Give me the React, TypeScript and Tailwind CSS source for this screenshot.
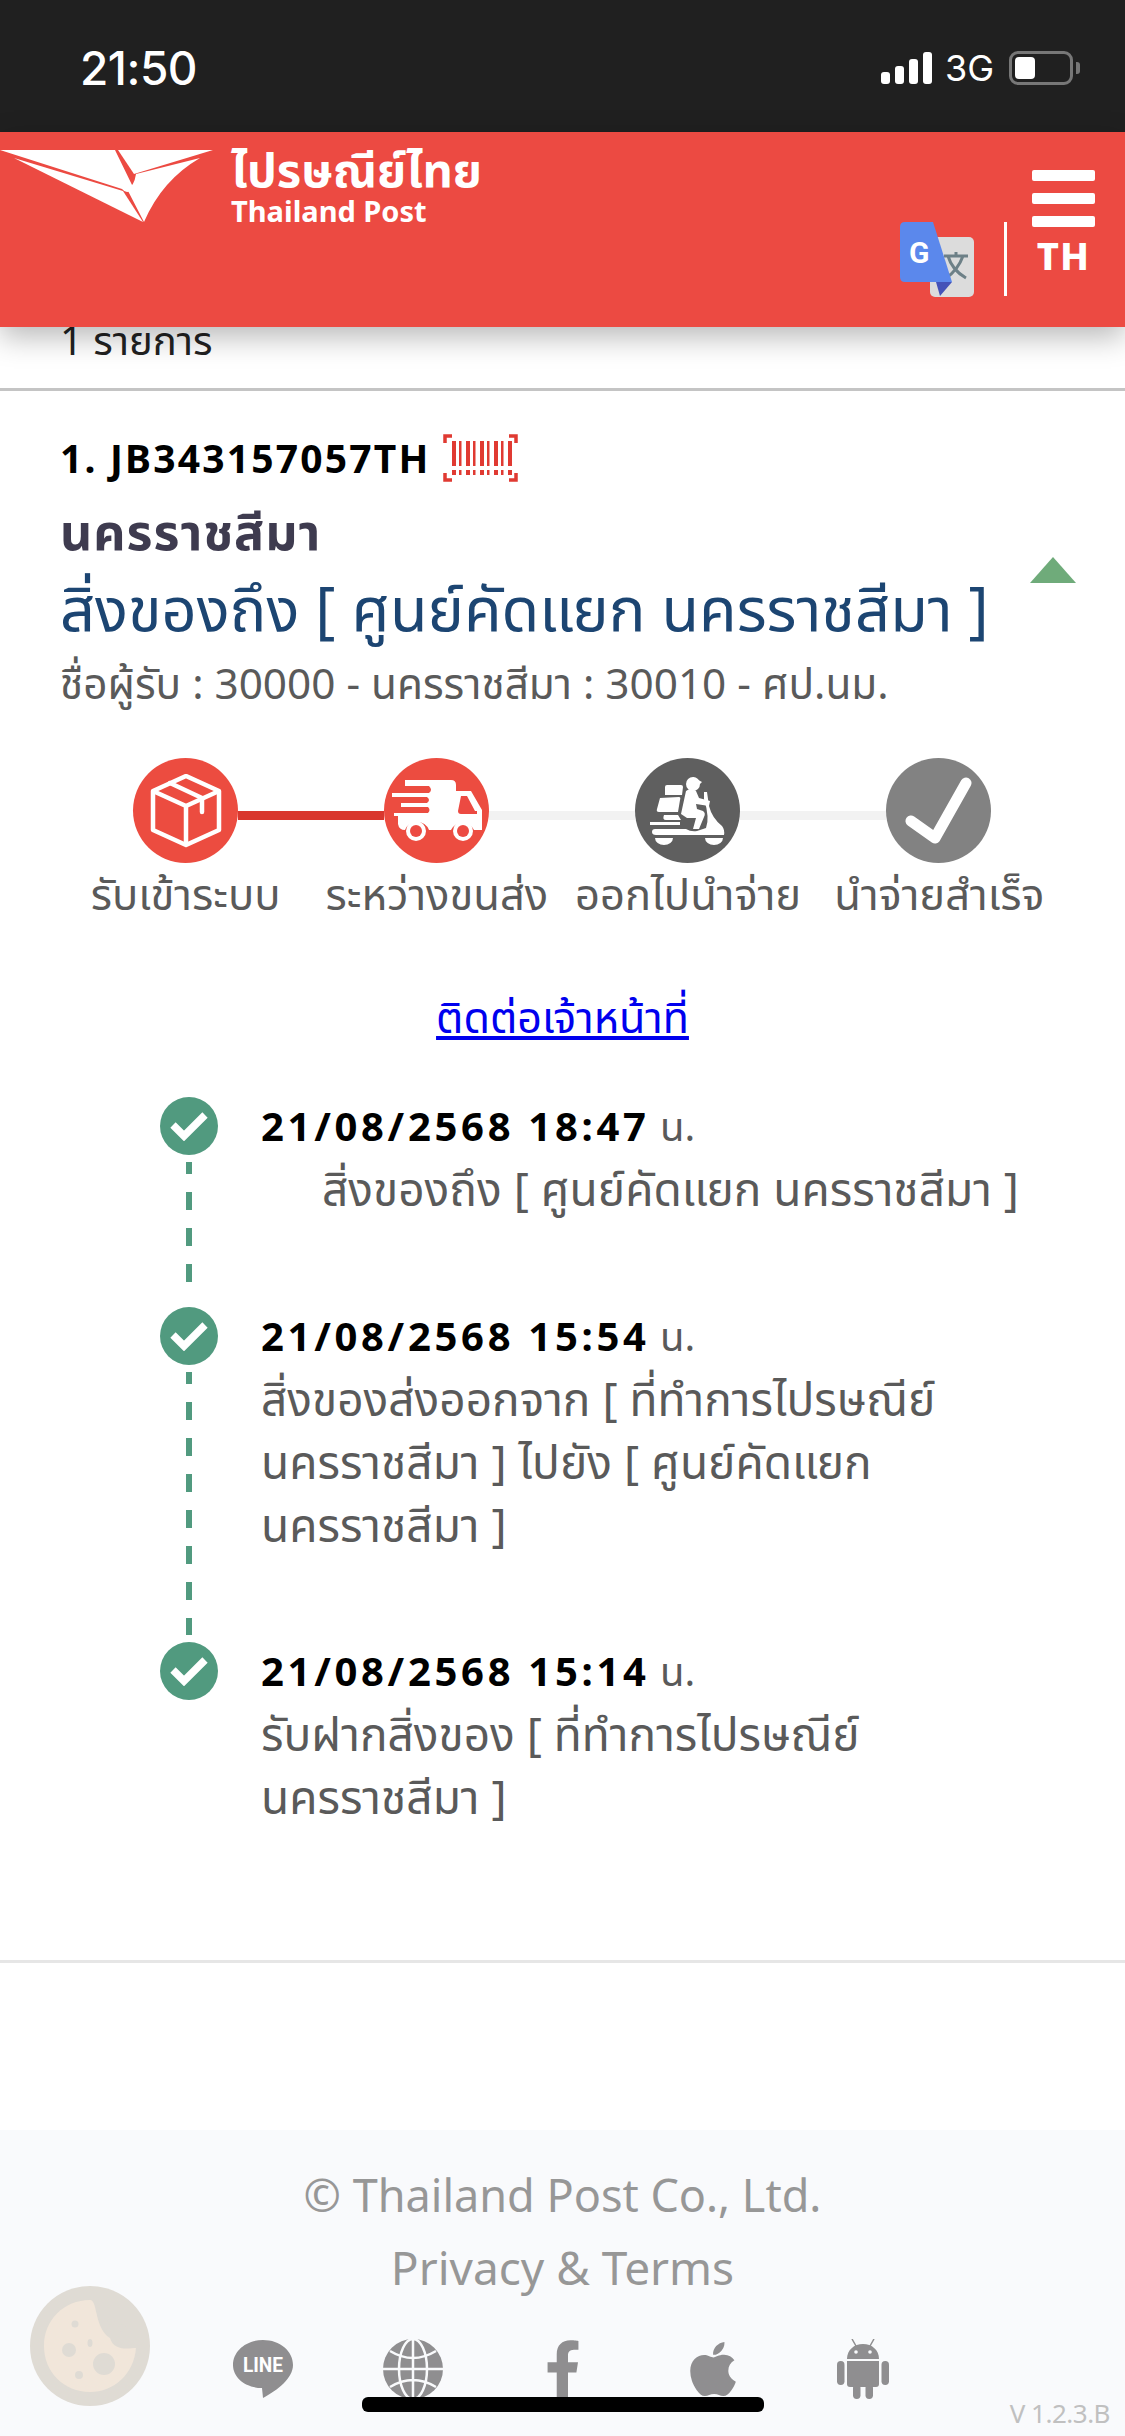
import { FaApple, FaFacebookF } from "react-icons/fa";

const FONT = "font-['Noto_Sans','Noto_Sans_Thai','Open_Sans',sans-serif]";

function StatusBar() {
  return (
    <div className="flex h-[132px] shrink-0 items-center justify-between bg-[#202020] pl-[80px] pr-[45px] pt-[4px] text-white">
      <span className="font-['Inter',sans-serif] text-[46px] font-medium leading-none tracking-[-0.5px]">21:50</span>
      <div className="flex items-center">
        <svg width="52" height="32" viewBox="0 0 52 32" fill="#fff">
          <rect x="0" y="20" width="9" height="12" rx="3" />
          <rect x="14" y="14" width="9" height="18" rx="3" />
          <rect x="28" y="7" width="9" height="25" rx="3" />
          <rect x="42" y="0" width="9" height="32" rx="3" />
        </svg>
        <span className="ml-[12px] font-['Inter',sans-serif] text-[36px] leading-none">3G</span>
        <div className="ml-[15px] flex h-[34px] w-[64px] items-center rounded-[9px] border-[3px] border-[#777] pl-[3px]">
          <div className="h-[22px] w-[20px] rounded-[4px] bg-white" />
        </div>
        <div className="ml-[3px] h-[12px] w-[4px] rounded-r-[3px] bg-[#777]" />
      </div>
    </div>
  );
}

function PostLogo() {
  return (
    <svg width="214" height="73" viewBox="0 0 214 73" className="shrink-0">
      <path d="M0 0 L115 0 L133 37 Q128 46 122 39 Z" fill="#fff" />
      <path d="M118 0 L213 0 L134 24 Z" fill="#fff" />
      <path d="M14 8 L123 41 L143 72 Z" fill="#fff" />
      <path d="M127 39 Q134 37 136 24 L200 8 Q162 30 144 72 Z" fill="#fff" />
    </svg>
  );
}

function TranslateIcon() {
  return (
    <svg width="75" height="75" viewBox="0 0 75 75" className="shrink-0">
      <rect x="30" y="15" width="44" height="60" rx="5" fill="#dcdcdc" />
      <path d="M44 34 H68 M56 30 V34 M48 34 Q52 48 66 56 M63 34 Q58 48 46 56" stroke="#6d8087" strokeWidth="3" fill="none" />
      <path d="M36 60 L52 60 L40 74 Z" fill="#4452b8" />
      <path d="M5 0 H33 L52 60 H5 Q0 60 0 55 V5 Q0 0 5 0 Z" fill="#5b88ec" />
      <text x="9" y="41" fontSize="30" fontWeight="700" fill="#fff" className="font-['Roboto',sans-serif]">G</text>
    </svg>
  );
}

function Header() {
  return (
    <header className="relative z-10 flex h-[195px] shrink-0 items-start justify-between bg-[#ec4a42] shadow-[0_10px_28px_rgba(0,0,0,0.28)]">
      <div className="flex items-start pt-[18px]">
        <PostLogo />
        <div className="ml-[17px] mt-[-3px] flex flex-col text-white">
          <span className="text-[47px] font-bold leading-[44px]">ไปรษณีย์ไทย</span>
          <span className="mt-[3px] text-[29px] font-bold leading-[34px]">Thailand Post</span>
        </div>
      </div>
      <div className="flex items-start pr-[30px] pt-[38px]">
        <div className="mt-[52px] flex items-start">
          <TranslateIcon />
          <div className="ml-[29px] h-[74px] w-[3px] bg-white" />
        </div>
        <div className="ml-[25px] flex w-[63px] flex-col items-center">
          <div className="flex w-full flex-col gap-[12px]">
            <div className="h-[11px] rounded-[2px] bg-white" />
            <div className="h-[11px] rounded-[2px] bg-white" />
            <div className="h-[11px] rounded-[2px] bg-white" />
          </div>
          <span className="mt-[6px] text-[38px] font-extrabold leading-[44px] tracking-[1px] text-white">TH</span>
        </div>
      </div>
    </header>
  );
}

function BarcodeIcon() {
  const bars = [6, 13, 20, 27, 34, 41, 48, 55, 62];
  return (
    <svg width="75" height="48" viewBox="0 0 75 48" fill="none" className="ml-[12px]">
      <path d="M9 2 H2 V9 M66 2 H73 V9 M2 39 V46 H9 M73 39 V46 H66" stroke="#e03a32" strokeWidth="3.5" />
      {bars.map((x) => (
        <g key={x}>
          <rect x={x + 3} y="7" width={x % 2 ? 2.5 : 4} height="25" fill="#e03a32" />
          <rect x={x + 3} y="36" width={x % 2 ? 2.5 : 4} height="5" fill="#e03a32" />
        </g>
      ))}
    </svg>
  );
}

function BoxIcon() {
  return (
    <svg width="72" height="74" viewBox="0 0 72 74" fill="none" stroke="#fff" strokeWidth="4.5" strokeLinejoin="round">
      <path d="M36 2 L69 17 V56 L36 71 L3 56 V17 Z" />
      <path d="M3 17 L36 32 L69 17 M36 32 V71" />
      <path d="M20 9 L52 24 V38" strokeLinecap="round" />
    </svg>
  );
}

function TruckIcon() {
  return (
    <svg width="92" height="62" viewBox="0 0 92 62" fill="#fff">
      <path d="M14 0 H60 Q65 0 65 5 V11 H80 L91 30 V50 H83 A13 13 0 0 0 60 50 H38 A13 13 0 0 0 14 50 Q8 50 7 44 V36 H3 V33 H37 Q40 30 37 27 H10 V23 H36 Q40 20 36 17 H1 V13 H38 Q42 10 38 6 H14 Z" />
      <path d="M70 16 H76 L84 31 H86 V34 H70 Q67 34 67 31 Z" fill="#ec4a42" />
      <circle cx="25" cy="51" r="10" fill="#fff" />
      <circle cx="25" cy="51" r="6" fill="#ec4a42" />
      <circle cx="72" cy="51" r="10" fill="#fff" />
      <circle cx="72" cy="51" r="6" fill="#ec4a42" />
    </svg>
  );
}

function ScooterIcon() {
  return (
    <svg width="76" height="70" viewBox="0 0 76 70" fill="#fff">
      <circle cx="43" cy="8" r="7" />
      <path d="M43 1 L52 6 L50 8 L42 8 Z" />
      <path d="M36 15 Q41 11 46 15 L49 22 L60 25 L59 30 L46 28 L47 33 L53 35 Q56 37 54 41 L49 53 L43 53 L46 42 L37 42 L31 38 Z" />
      <path d="M15 11 Q15 9 17 9 L31 9 Q33 9 33 11 L32 19 L15 19 Z" />
      <path d="M10 22 L29 21 Q31 21 30 24 L28 36 L9 36 Q6 36 7 33 Z" />
      <path d="M14 39 H28 L31 44 H16 Q12 44 14 39 Z" />
      <path d="M0 46 H30 V49 H0 Z" />
      <path d="M5 53 H36 Q41 56 47 55 L56 52 Q60 42 54 23 L54 16 L57 16 L59 30 Q62 42 72 50 Q75 54 74 59 H6 Q2 59 2 56 Q2 53 5 53 Z" />
      <path d="M5 62 H23 A9 7 0 0 1 5 62 Z M55 62 H73 A9 7 0 0 1 55 62 Z" />
    </svg>
  );
}

function CheckIcon() {
  return (
    <svg width="70" height="70" viewBox="0 0 70 70" fill="none" stroke="#fff" strokeWidth="11" strokeLinecap="round" strokeLinejoin="round">
      <path d="M7 45 L31 62 L62 7" />
    </svg>
  );
}

const STEPS = ["รับเข้าระบบ", "ระหว่างขนส่ง", "ออกไปนำจ่าย", "นำจ่ายสำเร็จ"];

function Stepper() {
  return (
    <div className="mt-[45px] flex flex-col">
      <div className="flex items-center pl-[133px] pr-[134px]">
        <div className="flex h-[105px] w-[105px] shrink-0 items-center justify-center rounded-full bg-[#ec4c40]"><BoxIcon /></div>
        <div className="mt-[10px] h-[9px] flex-1 bg-[#d9372e]" />
        <div className="flex h-[105px] w-[105px] shrink-0 items-center justify-center rounded-full bg-[#ec4c40]"><TruckIcon /></div>
        <div className="mt-[10px] h-[9px] flex-1 bg-[#f2f2f2]" />
        <div className="flex h-[105px] w-[105px] shrink-0 items-center justify-center rounded-full bg-[#5f5f5f]"><ScooterIcon /></div>
        <div className="mt-[10px] h-[9px] flex-1 bg-[#f2f2f2]" />
        <div className="flex h-[105px] w-[105px] shrink-0 items-center justify-center rounded-full bg-[#828282]"><CheckIcon /></div>
      </div>
      <div className="mt-[5px] grid grid-cols-4 pl-[60px] pr-[60px] text-center text-[43.5px] leading-[50px] text-[#5a5a5a]">
        {STEPS.map((s) => (
          <span key={s} className="whitespace-nowrap">{s}</span>
        ))}
      </div>
    </div>
  );
}

function TimelineDot() {
  return (
    <div className="flex h-[58px] w-[58px] shrink-0 items-center justify-center rounded-full bg-[#519a7f]">
      <svg width="38" height="30" viewBox="0 0 38 30" fill="none" stroke="#fff" strokeWidth="7.5">
        <path d="M3 14 L14 25 L35 4" />
      </svg>
    </div>
  );
}

function TimelineRow({
  date,
  lines,
  height,
  indent,
  last,
}: {
  date: string;
  lines: string[];
  height: string;
  indent?: boolean;
  last?: boolean;
}) {
  return (
    <div className={`flex ${height}`}>
      <div className="flex w-[58px] flex-col items-center">
        <TimelineDot />
        {!last && (
          <div className="my-[7px] w-[6px] flex-1 bg-[linear-gradient(to_bottom,#519a7f_18px,transparent_18px)] bg-[length:6px_36px] bg-[position:0_-6px]" />
        )}
      </div>
      <div className="ml-[43px] flex-1">
        <div className="mt-[-2px] whitespace-nowrap text-[40px] leading-[62px] text-black">
          <span className="font-bold tracking-[3.7px]">{date}</span>
          <span className="text-[#5a5a5a]"> น.</span>
        </div>
        {lines.map((l) => (
          <div key={l} className={`whitespace-nowrap text-[46px] leading-[63px] text-[#5a5a5a] ${indent ? "pl-[61px]" : ""}`}>
            {l}
          </div>
        ))}
      </div>
    </div>
  );
}

function Timeline() {
  return (
    <div className="mt-[50px] pl-[160px] pr-[40px]">
      <TimelineRow
        date="21/08/2568 18:47"
        lines={["สิ่งของถึง [ ศูนย์คัดแยก นครราชสีมา ]"]}
        height="h-[210px]"
        indent
      />
      <TimelineRow
        date="21/08/2568 15:54"
        lines={["สิ่งของส่งออกจาก [ ที่ทำการไปรษณีย์", "นครราชสีมา ] ไปยัง [ ศูนย์คัดแยก", "นครราชสีมา ]"]}
        height="h-[335px]"
      />
      <TimelineRow
        date="21/08/2568 15:14"
        lines={["รับฝากสิ่งของ [ ที่ทำการไปรษณีย์", "นครราชสีมา ]"]}
        height="h-[200px]"
        last
      />
    </div>
  );
}

function LineIcon() {
  return (
    <svg width="60" height="58" viewBox="0 0 60 58">
      <path d="M30 0 C47 0 60 11 60 25 C60 38 45 50 30 58 L29 48 C13 48 0 38 0 25 C0 11 13 0 30 0 Z" fill="#8f8e90" />
      <text x="30" y="32" textAnchor="middle" fontSize="21" fontWeight="700" textLength="40" lengthAdjust="spacingAndGlyphs" fill="#fff" className="font-['Roboto',sans-serif]">LINE</text>
    </svg>
  );
}

function GlobeIcon() {
  return (
    <svg width="60" height="60" viewBox="0 0 60 60">
      <circle cx="30" cy="30" r="30" fill="#8f8e90" />
      <g fill="none" stroke="#f9fafc" strokeWidth="2.5">
        <ellipse cx="30" cy="30" rx="14" ry="30" />
        <path d="M30 0 V60 M0 30 H60 M7 12 Q30 26 53 12 M7 48 Q30 34 53 48" />
      </g>
    </svg>
  );
}

function AndroidIcon() {
  return (
    <svg width="52" height="60" viewBox="0 0 52 60" fill="#8f8e90">
      <path d="M15 0 L19 7 M37 0 L33 7" stroke="#8f8e90" strokeWidth="1.5" />
      <path d="M10 20 C10 11 17 5 26 5 C35 5 42 11 42 20 Z" />
      <circle cx="19" cy="13" r="1.8" fill="#f9fafc" />
      <circle cx="33" cy="13" r="1.8" fill="#f9fafc" />
      <path d="M10 22 H42 V45 Q42 48 39 48 H13 Q10 48 10 45 Z" />
      <rect x="0" y="22" width="7.5" height="24" rx="3.7" />
      <rect x="44.5" y="22" width="7.5" height="24" rx="3.7" />
      <rect x="16" y="45" width="7.5" height="15" rx="3.7" />
      <rect x="28.5" y="45" width="7.5" height="15" rx="3.7" />
    </svg>
  );
}

function CookieIcon() {
  return (
    <svg width="120" height="120" viewBox="0 0 120 120">
      <circle cx="60" cy="60" r="60" fill="#dfdbd4" />
      <path d="M60 14 C68 14 64 42 80 52 C84 66 100 62 106 62 C104 88 84 106 60 106 C34 106 14 86 14 60 C14 34 34 14 60 14 Z" fill="#f1e6da" />
      <circle cx="39" cy="64" r="7" fill="#dfdbd4" />
      <ellipse cx="74" cy="78" rx="11" ry="11" fill="#dfdbd4" />
      <circle cx="49" cy="89" r="4" fill="#dfdbd4" />
      <ellipse cx="60" cy="57" rx="2.5" ry="4" fill="#dfdbd4" />
      <circle cx="45" cy="38" r="3.5" fill="#dfdbd4" />
      <circle cx="81" cy="35" r="4" fill="#dfdbd4" />
      <circle cx="92" cy="42" r="3.5" fill="#dfdbd4" />
    </svg>
  );
}

function Footer() {
  return (
    <footer className="relative flex flex-1 flex-col items-center bg-[#f9fafc]">
      <p className="mt-[29px] text-[45px] leading-[72px] text-[#979797]">© Thailand Post Co., Ltd.</p>
      <p className="text-[46px] leading-[72px] text-[#979797]">Privacy &amp; Terms</p>
      <div className="mt-[35px] flex w-full items-center pl-[233px]">
        <div className="flex w-[60px] justify-center"><LineIcon /></div>
        <div className="ml-[90px] flex w-[60px] justify-center"><GlobeIcon /></div>
        <div className="ml-[90px] flex w-[60px] justify-center"><FaFacebookF className="h-[60px] w-[36px] text-[#8f8e90]" /></div>
        <div className="ml-[90px] flex w-[60px] justify-center"><FaApple className="h-[62px] w-[56px] text-[#8f8e90]" /></div>
        <div className="ml-[90px] flex w-[60px] justify-center"><AndroidIcon /></div>
      </div>
      <div className="absolute left-[30px] top-[156px]"><CookieIcon /></div>
      <span className="absolute bottom-[10px] right-[15px] text-[26px] leading-none tracking-[-0.5px] text-[#c0c0c0]">V 1.2.3.B</span>
      <div className="absolute bottom-[24px] left-[362px] h-[15px] w-[402px] rounded-[6px] bg-black" />
    </footer>
  );
}

export default function App() {
  return (
    <div className={`flex h-[2436px] w-[1125px] flex-col overflow-hidden bg-white ${FONT}`}>
      <StatusBar />
      <Header />
      <div className="flex h-[64px] shrink-0 items-start border-b-[3px] border-[#c4c4c4] pl-[60px]">
        <span className="mt-[-12px] text-[40px] leading-[50px] text-[#222]">1 รายการ</span>
      </div>
      <main className="h-[1572px] shrink-0 border-b-[3px] border-[#e6e6e6]">
        <section className="relative pl-[60px] pt-[42px]">
          <div className="flex items-center">
            <span className="text-[39px] font-bold leading-[50px] tracking-[2.2px] text-black">1. JB343157057TH</span>
            <BarcodeIcon />
          </div>
          <div className="mt-[17px] text-[50px] font-bold leading-[62px] tracking-[1px] text-[#3e3b4f]">นครราชสีมา</div>
          <div className="mt-[6px] whitespace-nowrap text-[61.3px] leading-[78px] text-[#1c4572]">สิ่งของถึง [ ศูนย์คัดแยก นครราชสีมา ]</div>
          <div className="mt-[7px] whitespace-nowrap text-[42.3px] leading-[60px] text-[#5a5a5a]">ชื่อผู้รับ : 30000 - นครราชสีมา : 30010 - ศป.นม.</div>
          <div className="absolute right-[49px] top-[166px] h-0 w-0 border-x-[23px] border-b-[26px] border-x-transparent border-b-[#6fab7a]" />
        </section>
        <Stepper />
        <div className="mt-[69px] text-center">
          <a href="#" className="text-[43px] leading-[60px] text-[#0000ee] underline">ติดต่อเจ้าหน้าที่</a>
        </div>
        <Timeline />
      </main>
      <div className="h-[167px] shrink-0" />
      <Footer />
    </div>
  );
}
